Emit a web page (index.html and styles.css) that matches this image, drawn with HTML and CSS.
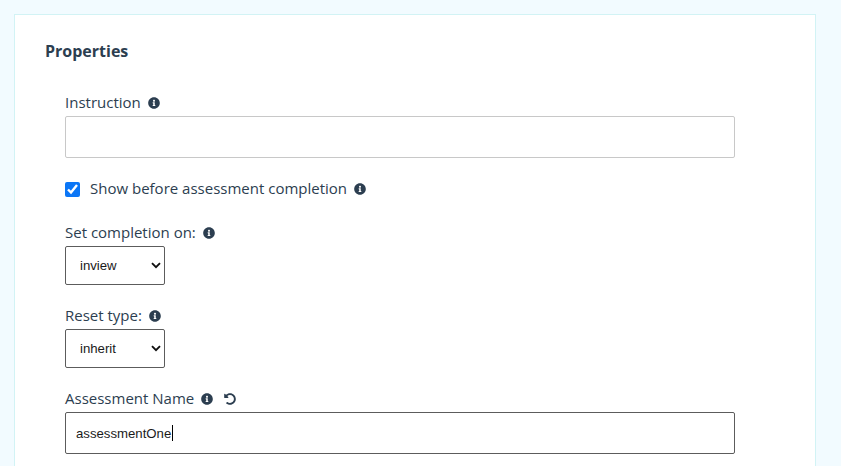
FILE: index.html
```html
<!DOCTYPE html>
<html lang="en">
  <head>
    <meta charset="UTF-8" />
    <meta name="viewport" content="width=device-width, initial-scale=1.0" />
    <title>Properties</title>
    <link rel="stylesheet" href="styles.css">
  </head>
  <body>
    <svg class="icon-defs" aria-hidden="true">
      <symbol id="info" viewBox="0 0 512 512">
        <path fill="currentColor" d="M256 8C119.043 8 8 119.083 8 256c0 136.997 111.043 248 248 248s248-111.003 248-248C504 119.083 392.957 8 256 8zm0 110c23.196 0 42 18.804 42 42s-18.804 42-42 42-42-18.804-42-42 18.804-42 42-42zm56 254c0 6.627-5.373 12-12 12h-88c-6.627 0-12-5.373-12-12v-24c0-6.627 5.373-12 12-12h12v-64h-12c-6.627 0-12-5.373-12-12v-24c0-6.627 5.373-12 12-12h64c6.627 0 12 5.373 12 12v100h12c6.627 0 12 5.373 12 12v24z"/>
      </symbol>
      <symbol id="undo" viewBox="0 0 512 512">
        <path fill="currentColor" d="M255.545 8c-66.269.119-126.438 26.233-170.86 68.685L48.971 40.971C33.851 25.851 8 36.559 8 57.941V192c0 13.255 10.745 24 24 24h134.059c21.382 0 32.09-25.851 16.971-40.971l-41.75-41.75c30.864-28.899 70.801-44.907 113.23-45.273 92.398-.798 170.283 73.977 169.484 169.442C423.236 348.009 349.816 424 256 424c-41.127 0-79.997-14.678-110.63-41.556-4.743-4.161-11.906-3.908-16.368.553L89.34 422.659c-4.872 4.872-4.631 12.815.482 17.433C133.798 479.813 192.074 504 256 504c136.966 0 247.999-111.033 248-247.998C504.001 119.193 392.354 7.755 255.545 8z"/>
      </symbol>
    </svg>

    <div class="card">
      <h2 class="card-title">Properties</h2>

      <form class="props-form">
        <div class="field field-text">
          <div class="field-label">
            <label for="instruction">Instruction</label>
            <svg class="icon"><use href="#info"></use></svg>
          </div>
          <input type="text" id="instruction" class="text-input" />
        </div>

        <div class="field field-check">
          <input type="checkbox" id="showBefore" class="check-input" checked />
          <label for="showBefore">Show before assessment completion</label>
          <svg class="icon"><use href="#info"></use></svg>
        </div>

        <div class="field field-select">
          <div class="field-label">
            <label for="completion">Set completion on:</label>
            <svg class="icon"><use href="#info"></use></svg>
          </div>
          <select id="completion" class="select-input">
            <option>inview</option>
            <option>allItems</option>
          </select>
        </div>

        <div class="field field-select">
          <div class="field-label">
            <label for="resetType">Reset type:</label>
            <svg class="icon"><use href="#info"></use></svg>
          </div>
          <select id="resetType" class="select-input">
            <option>inherit</option>
            <option>hard</option>
            <option>soft</option>
          </select>
        </div>

        <div class="field field-text">
          <div class="field-label">
            <label for="assessmentName">Assessment Name</label>
            <svg class="icon"><use href="#info"></use></svg>
            <svg class="icon icon-undo"><use href="#undo"></use></svg>
          </div>
          <div class="input-wrap">
            <input type="text" id="assessmentName" class="text-input text-input-active" value="assessmentOne" />
            <span class="caret"></span>
          </div>
        </div>
      </form>
    </div>
  </body>
</html>
```

FILE: styles.css
```css
:root {
  --text-color: #2c3e50;
  --card-border: #d2f3f5;
  --page-bg: #f2fbff;
}
html,
body {
  height: 466px;
  overflow: hidden;
}
body {
  margin: 0;
  padding: 14px 25px 0 14px;
  box-sizing: border-box;
  background-color: var(--page-bg);
  color: var(--text-color);
  font-family: "Open Sans", sans-serif;
  font-size: 15px;
  line-height: 20px;
}
.icon-defs {
  display: none;
}
/* runs past the bottom of the window, the panel is cut off there */
.card {
  background: white;
  border: 1px solid var(--card-border);
  border-bottom: none;
  padding: 26px 30px 0;
  height: 452px;
  box-sizing: border-box;
}
.card-title {
  margin: 0;
  font-size: 16px;
  line-height: 20px;
  font-weight: 700;
}
.props-form {
  width: 670px;
  margin: 32px 0 0 20px;
}
.field-label {
  display: flex;
  align-items: center;
  height: 20px;
  margin-bottom: 3px;
}
.field-label label,
.field-check label {
  margin-top: -2px;
}
.icon {
  display: block;
  width: 12px;
  height: 12px;
  margin-left: 7px;
  flex: none;
}
.icon-undo {
  width: 12px;
  height: 12px;
  margin-left: 11px;
}
.text-input {
  display: block;
  width: 100%;
  height: 42px;
  padding: 0 10px;
  box-sizing: border-box;
  border: 1px solid #c8c8c8;
  border-radius: 2px;
  background: white;
  color: #1a1a1a;
  font-family: "Liberation Sans", Arial, sans-serif;
  font-size: 13.2px;
  outline: none;
}
.text-input-active {
  border-color: #5c5c5c;
}
.input-wrap {
  position: relative;
}
.caret {
  position: absolute;
  left: 107px;
  top: 13px;
  width: 1px;
  height: 16px;
  background: black;
}
.field-check {
  display: flex;
  align-items: center;
  height: 20px;
  margin-top: 21px;
}
.check-input {
  width: 15px;
  height: 15px;
  margin: 0 10px 0 0;
  accent-color: #0b76f6;
}
.field-select {
  margin-top: 21px;
}
.field-check + .field-select {
  margin-top: 24px;
}
.select-input {
  display: block;
  width: 100px;
  height: 39px;
  padding: 0 14px;
  border: 1px solid #5c5c5c;
  border-radius: 2px;
  appearance: none;
  background: white url("data:image/svg+xml,%3Csvg xmlns='http://www.w3.org/2000/svg' viewBox='0 0 10 7'%3E%3Cpath d='M1 1.2l4 4 4-4' fill='none' stroke='%23111' stroke-width='1.9'/%3E%3C/svg%3E") no-repeat right 3px center / 10px 7px;
  color: #1a1a1a;
  font-family: "Liberation Sans", Arial, sans-serif;
  font-size: 13.2px;
}
.field-select + .field-text {
  margin-top: 21px;
}
```
